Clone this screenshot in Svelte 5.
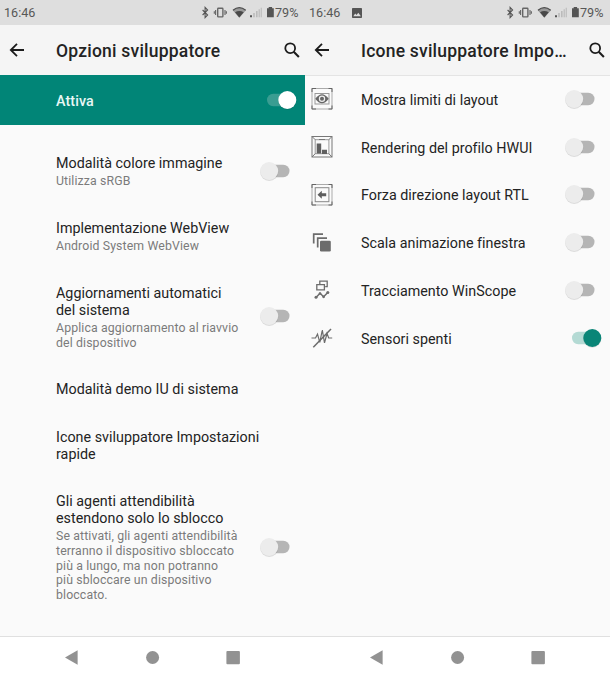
<script>
  const options = [
    { title: 'Modalità colore immagine', note: 'Utilizza sRGB', toggle: true, h: 65 },
    { title: 'Implementazione WebView', note: 'Android System WebView', h: 65 },
    { title: 'Aggiornamenti automatici\ndel sistema', note: 'Applica aggiornamento al riavvio\ndel dispositivo', toggle: true, h: 96 },
    { title: 'Modalità demo IU di sistema', h: 48 },
    { title: 'Icone sviluppatore Impostazioni\nrapide', h: 65 },
    {
      title: 'Gli agenti attendibilità\nestendono solo lo sblocco',
      note: 'Se attivati, gli agenti attendibilità\nterranno il dispositivo sbloccato\npiù a lungo, ma non potranno\npiù sbloccare un dispositivo\nbloccato.',
      toggle: true,
      h: 139
    }
  ];
  const tiles = [
    { icon: 'bounds', title: 'Mostra limiti di layout' },
    { icon: 'bars', title: 'Rendering del profilo HWUI' },
    { icon: 'rtl', title: 'Forza direzione layout RTL' },
    { icon: 'stack', title: 'Scala animazione finestra' },
    { icon: 'trace', title: 'Tracciamento WinScope' },
    { icon: 'sensors', title: 'Sensori spenti', on: true }
  ];
</script>

{#snippet toggle(kind)}
  <svg class="switch" width="40" height="24" viewBox="0 0 40 24">
    {#if kind === 'off'}
      <rect x="6" y="5.8" width="25.5" height="12.4" rx="6.2" fill="#b5b5b5" />
      <circle cx="11.2" cy="12.8" r="9.1" fill="#000" opacity=".12" />
      <circle cx="11.2" cy="12" r="9" fill="#ececec" />
    {:else}
      <rect x="9" y="5.8" width="24" height="12.4" rx="6.2" fill={kind === 'light' ? '#3a9d92' : '#b4dad4'} />
      <circle cx="29.3" cy="12.6" r="9.1" fill="#000" opacity=".12" />
      <circle cx="29.3" cy="12" r="9" fill={kind === 'light' ? '#fff' : '#0a8577'} />
    {/if}
  </svg>
{/snippet}

{#snippet status(picture)}
  <div class="status">
    <span class="time">16:46</span>
    {#if picture}
      <svg class="pic" width="12" height="12" viewBox="0 0 12 12">
        <path fill="#555" fill-rule="evenodd" d="M1.8 1h8.4q.8 0 .8.8v8.4q0 .8-.8.8H1.8q-.8 0-.8-.8V1.8Q1 1 1.8 1ZM2.3 9.3h7.6L7.3 5.7 5.5 8 4.2 6.6Z" />
      </svg>
    {/if}
    <svg class="signals" width="75" height="20" viewBox="200 3 75 20">
      <path d="m202.6 10 5 5-2.5 2.6V7.4l2.5 2.6-5 5" fill="none" stroke="#555" stroke-width="1.1" />
      <g fill="none" stroke="#666">
        <rect x="217.7" y="8.3" width="5.2" height="8.6" rx=".7" stroke-width="1.4" />
        <path d="M215.6 10v5M225 10v5M214.3 11.3v2.4M226.4 11.3v2.4" stroke-width="1.1" />
      </g>
      <path d="M232.7 10.2Q239.3 4.7 246 10.2L239.3 17.8Z" fill="#999" />
      <path d="M233 10.2Q239.3 5.2 245.7 10.2" fill="none" stroke="#4d4d4d" stroke-width="1.3" />
      <path d="M235 12.3Q239.3 9.5 243.7 12.3L239.3 17.6Z" fill="#494949" />
      <path d="M250 15.2h2v2h-2Z" fill="#555" />
      <path d="M253.2 13h1.6v4.2h-1.6ZM256 11h1.6v6.2h-1.6ZM258.6 9.2h1.2v8h-1.2ZM260.7 7.7h1.1v9.5h-1.1Z" fill="#bbb" />
      <path d="M267 8.3h1.7V7h3.4v1.3h1.7v9H267Z" fill="#555" />
    </svg>
    <span class="pct">79%</span>
  </div>
{/snippet}

{#snippet header(title)}
  <div class="header">
    <svg class="back" width="16" height="16" viewBox="0 0 16 16">
      <path d="M15 8H2M8 1.8 1.8 8 8 14.2" fill="none" stroke="#1c1c1c" stroke-width="1.8" />
    </svg>
    <h1>{title}</h1>
    <svg class="search" width="18" height="18" viewBox="0 0 18 18">
      <circle cx="7.2" cy="7.2" r="4.9" fill="none" stroke="#1c1c1c" stroke-width="1.8" />
      <path d="m10.7 10.7 5.2 5.2" stroke="#1c1c1c" stroke-width="2.1" />
    </svg>
  </div>
{/snippet}

{#snippet nav()}
  <div class="nav">
    <svg width="305" height="42" viewBox="0 0 305 42" fill="#929292">
      <path d="M65 20.5 77.6 13.2v14.6Z" />
      <circle cx="152.6" cy="20.5" r="6.5" />
      <rect x="226.4" y="14" width="13.5" height="13.2" rx="1" />
    </svg>
  </div>
{/snippet}

{#snippet glyph(name)}
  <svg class="glyph" width="24" height="24" viewBox="0 0 24 24" fill="none" stroke="#6c6c6c" stroke-width="1">
    {#if name === 'bounds'}
      <rect x="2" y="1.5" width="20" height="20.5" stroke="#aaa" />
      <path d="M2 5V1.5h4M18.5 1.5H22V5M2 18.5V22h4M18.5 22H22v-3.5" stroke="#666" />
      <rect x="5" y="6.5" width="14" height="10.500" stroke="#999" />
      <path d="M5.300 11.700Q12 2.700 18.700 11.700 12 20.700 5.300 11.700Z" fill="#666" stroke="none" />
      <circle cx="12" cy="11.700" r="2.600" fill="#666" stroke="#eee" stroke-width="1.200" />
    {:else if name === 'bars'}
      <rect x="2" y="1.5" width="20" height="20.5" stroke="#777" />
      <rect x="5.2" y="4.7" width="13.7" height="14" stroke="#999" />
      <path d="m2 1.5 3.200 3.200M22 1.500l-3.200 3.200M2 22l3.200-3.300M22 22l-3.200-3.300M9 4.500h6" stroke="#777" />
      <path d="M6.700 8.500h4.500v10H6.700ZM12 14.800h5v4.200h-5Z" fill="#606060" stroke="none" />
    {:else if name === 'rtl'}
      <rect x="2" y="1.5" width="20" height="20.5" stroke="#aaa" />
      <path d="M2 5V1.5h4M18.5 1.5H22V5M2 18.5V22h4M18.5 22H22v-3.5" stroke="#666" />
      <rect x="5.2" y="4.7" width="13.7" height="14" stroke="#888" />
      <path d="m7.500 11.700 4.300-4v2.600h4.400v2.900h-4.400v2.600Z" fill="#5d5d5d" stroke="none" />
    {:else if name === 'stack'}
      <path d="M3.700 12.500V3.200H13M7.700 16.500V7.200H17" stroke-width="1.700" />
      <rect x="10" y="9.700" width="10.800" height="10.800" rx="1.300" fill="#6c6c6c" stroke="none" />
    {:else if name === 'trace'}
      <path d="M9.800 6V3.100h7.400v5.600h-2" stroke-width="1.300" />
      <path d="M6.800 6.700h7.600v5.100H6.800Z" stroke-width="1.300" />
      <path d="m6 19.500 4-4.200 3.600 3.500 4.200-4.300" stroke-width="1.500" />
      <g fill="#6c6c6c" stroke="none">
        <circle cx="6" cy="19.3" r="1.5" /><circle cx="10" cy="15.5" r="1.3" /><circle cx="13.6" cy="18.8" r="1.4" /><circle cx="17.8" cy="14.4" r="1.5" />
      </g>
    {:else}
      <path d="M1.5 12h4l2-3.800 2.300 8.200L12.300 4l2.200 12.800L17 7.500l1.700 4.500h3.500" stroke-width="1.200" />
      <path d="M3.300 21.300 21 3" stroke-width="1.500" />
    {/if}
  </svg>
{/snippet}

<main>
  <section>
    {@render status(false)}
    {@render header('Opzioni sviluppatore')}
    <div class="active">
      <span>Attiva</span>
      {@render toggle('light')}
    </div>
    <div class="options">
      {#each options as o}
        <div class="option" style="height: {o.h}px">
          <div class="copy">
            <div class="title">{o.title}</div>
            {#if o.note}<div class="note">{o.note}</div>{/if}
          </div>
          {#if o.toggle}<div class="lift">{@render toggle('off')}</div>{/if}
        </div>
      {/each}
    </div>
    {@render nav()}
  </section>

  <section>
    {@render status(true)}
    {@render header('Icone sviluppatore Impo…')}
    <div class="tiles">
      {#each tiles as t}
        <div class="tile">
          {@render glyph(t.icon)}
          <span class="title">{t.title}</span>
          {@render toggle(t.on ? 'teal' : 'off')}
        </div>
      {/each}
    </div>
    {@render nav()}
  </section>
</main>

<style>
  main {
    display: flex;
    width: 610px;
    height: 679px;
    background: #fafafa;
    font-family: Roboto, 'Liberation Sans', sans-serif;
    color: #232323;
  }
  section {
    display: flex;
    flex-direction: column;
    width: 305px;
    height: 679px;
  }
  svg {
    display: block;
    flex: none;
  }
  .status {
    display: flex;
    align-items: center;
    height: 25px;
    box-sizing: border-box;
    padding: 0 6px 0 4px;
    background: #dedede;
    color: #575757;
    font-size: 12.6px;
    line-height: 15px;
  }
  .time {
    width: 31px;
  }
  .pic {
    margin-left: 11px;
  }
  .signals {
    margin-left: auto;
  }
  .pct {
    width: 24px;
    white-space: nowrap;
  }
  .header {
    display: flex;
    align-items: center;
    height: 50px;
    box-sizing: border-box;
    padding: 0 4px 0 9px;
    background: #f5f5f5;
  }
  h1 {
    flex: 1;
    margin: 2px 0 0 31px;
    font-size: 17.5px;
    font-weight: 500;
    letter-spacing: 0.22px;
    line-height: 24px;
    white-space: nowrap;
  }
  .active {
    display: flex;
    align-items: center;
    justify-content: space-between;
    height: 50px;
    padding: 0 7px 0 56px;
    background: #018577;
    color: #e8f7f5;
    font-size: 14.3px;
    font-weight: 500;
    letter-spacing: 0.1px;
    line-height: 18px;
  }
  .active span {
    padding-top: 1px;
  }
  .options {
    flex: 1;
    padding-top: 14.5px;
  }
  .option {
    display: flex;
    align-items: center;
    justify-content: space-between;
    padding: 0 7px 0 56px;
  }
  .title {
    font-size: 14.3px;
    letter-spacing: 0.02px;
    line-height: 17px;
    white-space: pre;
  }
  .note {
    margin-top: 2px;
    color: #7b7b7b;
    font-size: 12.3px;
    letter-spacing: 0.12px;
    line-height: 14.7px;
    white-space: pre;
  }
  .lift {
    margin-bottom: 3px;
  }
  .tiles {
    flex: 1;
    padding-top: 0.5px;
    box-shadow: inset 0 1px 0 #e4e4e4;
  }
  .tile {
    display: flex;
    align-items: center;
    height: 47.75px;
    padding: 0 7px 0 5px;
  }
  .tile .title {
    flex: 1;
    padding-top: 2px;
    margin-left: 27px;
  }
  .tile .switch {
    margin-bottom: 1px;
  }
  .nav {
    height: 42px;
    border-top: 1px solid #e0e0e0;
    background: #fff;
  }
</style>
